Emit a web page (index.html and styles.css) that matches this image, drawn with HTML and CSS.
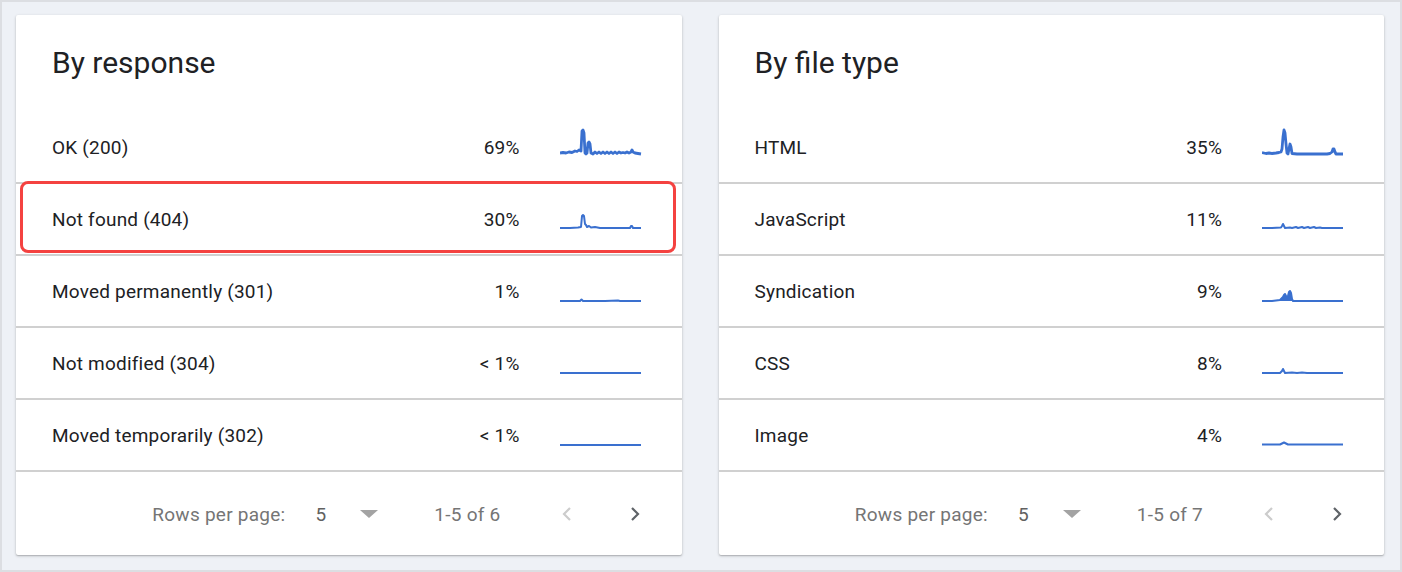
FILE: index.html
```html
<!DOCTYPE html>
<html lang="en">
<head>
  <meta charset="UTF-8">
  <title>Crawl stats</title>
  <link rel="stylesheet" href="styles.css">
</head>
<body>
  <div class="page">

    <section class="card">
      <h2 class="card-title">By response</h2>

      <div class="row">
        <span class="label">OK (200)</span>
        <span class="pct">69%</span>
        <svg class="spark" viewBox="0 0 82 56" preserveAspectRatio="none"><polyline class="thick" points="0,34 3,33.5 6,34 9,33 12,33.5 15,32 17,32.5 19,31 21,32 22,12 23,11 24,14 25,34 26,35 27,34 28,24 29,23 30,25 31,34 33,35 35,33 37,34.5 39,33 41,34.5 43,33 45,34.5 47,33 49,34.5 51,33 53,34.5 55,33 57,34.5 59,33 61,34 63,33.5 65,34 67,33 69,34 71,33 72,31 73,33 75,34 78,34.5 81,35"/></svg>
      </div>
      <div class="row">
        <span class="label">Not found (404)</span>
        <span class="pct">30%</span>
        <svg class="spark" viewBox="0 0 82 56" preserveAspectRatio="none"><polyline points="0,37 10,37 18,36.5 21,36 22,25 23,24 24,25 25,33 26,34 27,36 29,35 31,36.5 35,36 40,37 50,37 60,37 70,37 71,35 72,35 73,37 81,37"/></svg>
      </div>
      <div class="row">
        <span class="label">Moved permanently (301)</span>
        <span class="pct">1%</span>
        <svg class="spark" viewBox="0 0 82 56" preserveAspectRatio="none"><polyline points="0,38 20,38 21.5,36.5 23,38 45,38 58,37.6 60,38 81,38"/></svg>
      </div>
      <div class="row">
        <span class="label">Not modified (304)</span>
        <span class="pct">&lt; 1%</span>
        <svg class="spark" viewBox="0 0 82 56" preserveAspectRatio="none"><polyline points="0,38 81,38"/></svg>
      </div>
      <div class="row">
        <span class="label">Moved temporarily (302)</span>
        <span class="pct">&lt; 1%</span>
        <svg class="spark" viewBox="0 0 82 56" preserveAspectRatio="none"><polyline points="0,38 81,38"/></svg>
      </div>

      <div class="pager">
        <span class="pager-label">Rows per page:</span>
        <span class="pager-size">5</span>
        <svg class="pager-drop" viewBox="0 0 18 8"><polygon points="0,0 18,0 9,8"/></svg>
        <span class="pager-range">1-5 of 6</span>
        <svg class="chev prev" viewBox="0 0 12 14"><polyline points="9,1 3,7 9,13"/></svg>
        <svg class="chev next" viewBox="0 0 12 14"><polyline points="3,1 9,7 3,13"/></svg>
      </div>

      <div class="highlight"></div>
    </section>

    <section class="card">
      <h2 class="card-title">By file type</h2>

      <div class="row">
        <span class="label">HTML</span>
        <span class="pct">35%</span>
        <svg class="spark" viewBox="0 0 82 56" preserveAspectRatio="none"><polyline class="thick" points="0,33.5 4,34.5 7,34 10,34.5 14,34 17,33.5 19,33 20,30 21,18 22,11 23,14 24,25 25,34 26,35 27,30 28,25 29,28 30,34.5 35,35 45,35 55,35 65,35 68,34.5 70,33 71,30 72,30 73,33 74,35 81,35"/></svg>
      </div>
      <div class="row">
        <span class="label">JavaScript</span>
        <span class="pct">11%</span>
        <svg class="spark" viewBox="0 0 82 56" preserveAspectRatio="none"><polyline points="0,37 10,37 19,36.5 20,35 21,33 22,35 23,37 28,36.5 30,37 34,36 36,37 40,36 42,37 46,36 48,37 52,36 54,37 58,36.5 60,37 81,37"/></svg>
      </div>
      <div class="row">
        <span class="label">Syndication</span>
        <span class="pct">9%</span>
        <svg class="spark" viewBox="0 0 82 56" preserveAspectRatio="none"><polyline class="fill" points="0,38 10,38 14,37.5 18,37 19,36 21,34 22,32 23,31 24,33 25,35 26,33 27,29 28,28 29,30 30,36 31,38 81,38"/></svg>
      </div>
      <div class="row">
        <span class="label">CSS</span>
        <span class="pct">8%</span>
        <svg class="spark" viewBox="0 0 82 56" preserveAspectRatio="none"><polyline points="0,38 18,38 20,36 21,34 22,36 23,38 30,37.5 35,38 40,37.5 45,38 81,38"/></svg>
      </div>
      <div class="row">
        <span class="label">Image</span>
        <span class="pct">4%</span>
        <svg class="spark" viewBox="0 0 82 56" preserveAspectRatio="none"><polyline points="0,37.5 18,37.5 20,36.5 22,35.5 24,36.5 26,37.5 81,37.5"/></svg>
      </div>

      <div class="pager">
        <span class="pager-label">Rows per page:</span>
        <span class="pager-size">5</span>
        <svg class="pager-drop" viewBox="0 0 18 8"><polygon points="0,0 18,0 9,8"/></svg>
        <span class="pager-range">1-5 of 7</span>
        <svg class="chev prev" viewBox="0 0 12 14"><polyline points="9,1 3,7 9,13"/></svg>
        <svg class="chev next" viewBox="0 0 12 14"><polyline points="3,1 9,7 3,13"/></svg>
      </div>
    </section>

  </div>
</body>
</html>
```

FILE: styles.css
```css
* {
  margin: 0;
  padding: 0;
  box-sizing: border-box;
}

body {
  font-family: Roboto, "Liberation Sans", sans-serif;
  color: #202124;
}

/* Page frame */
.page {
  height: 572px;
  border: 2px solid #dcdee2;
  background: #eef1f6;
  padding: 13px 16px 15px 14px;
  display: grid;
  grid-template-columns: 1fr 1fr;
  gap: 37px;
}

/* Card */
.card {
  position: relative;
  background: #fff;
  border-radius: 2px;
  box-shadow: 0 1px 3px rgba(0, 0, 0, 0.22), 0 1px 1px rgba(0, 0, 0, 0.12);
  display: flex;
  flex-direction: column;
}

.card-title {
  font-size: 30px;
  font-weight: 400;
  line-height: 32px;
  padding: 32px 36px 33px;
  color: #202124;
}

/* Table rows */
.row {
  height: 72px;
  border-bottom: 2px solid #d0d0d0;
  display: grid;
  grid-template-columns: 1fr auto 82px;
  column-gap: 40px;
  align-items: center;
  padding: 0 40px 0 36px;
  font-size: 19px;
  letter-spacing: 0.2px;
}

.pct {
  text-align: right;
}

.spark {
  width: 82px;
  height: 56px;
  display: block;
}

.spark polyline {
  fill: none;
  stroke: #3a70cf;
  stroke-width: 2;
  stroke-linejoin: round;
}

.spark polyline.thick {
  stroke-width: 2.8;
}

.spark polyline.fill {
  fill: #3a70cf;
}

/* Pagination footer */
.pager {
  flex: 1;
  display: flex;
  align-items: center;
  justify-content: flex-end;
  padding: 1px 41px 0 0;
  font-size: 19px;
  letter-spacing: 0.25px;
  color: #757575;
}

.pager-size {
  margin-left: 30px;
  color: #616161;
}

.pager-drop {
  width: 18px;
  height: 8px;
  margin-left: 34px;
  fill: #a3a3a3;
}

.pager-range {
  margin-left: 56px;
}

.chev {
  width: 12px;
  height: 14px;
  fill: none;
  stroke-width: 2.2;
}

.chev.prev {
  margin-left: 60px;
  stroke: #cccccc;
}

.chev.next {
  margin-left: 56px;
  stroke: #5f6368;
}

/* Annotation box over the 404 row */
.highlight {
  position: absolute;
  left: 4px;
  top: 166px;
  width: 656px;
  height: 72px;
  border: 3px solid #f44240;
  border-radius: 8px;
}
```
